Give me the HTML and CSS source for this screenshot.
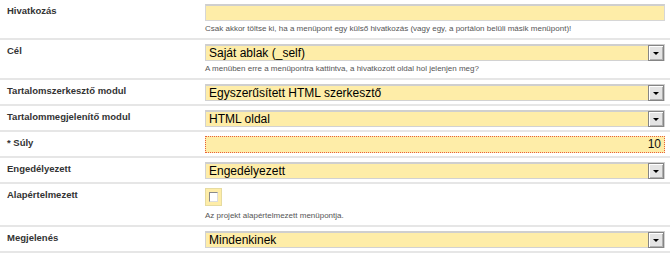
FILE: index.html
```html
<!DOCTYPE html>
<html lang="hu">
<head>
<meta charset="utf-8">
<link rel="stylesheet" href="styles.css">
</head>
<body>
<div class="form">
  <div class="row">
    <div class="label">Hivatkozás</div>
    <div class="field">
      <div class="input"></div>
      <div class="help">Csak akkor töltse ki, ha a menüpont egy külső hivatkozás (vagy egy, a portálon belüli másik menüpont)!</div>
    </div>
  </div>
  <div class="row">
    <div class="label">Cél</div>
    <div class="field">
      <div class="select"><span class="value">Saját ablak (_self)</span><span class="btn"><span class="tri"></span></span></div>
      <div class="help">A menüben erre a menüpontra kattintva, a hivatkozott oldal hol jelenjen meg?</div>
    </div>
  </div>
  <div class="row">
    <div class="label">Tartalomszerkesztő modul</div>
    <div class="field">
      <div class="select"><span class="value">Egyszerűsített HTML szerkesztő</span><span class="btn"><span class="tri"></span></span></div>
    </div>
  </div>
  <div class="row">
    <div class="label">Tartalommegjelenítő modul</div>
    <div class="field">
      <div class="select"><span class="value">HTML oldal</span><span class="btn"><span class="tri"></span></span></div>
    </div>
  </div>
  <div class="row">
    <div class="label">* Súly</div>
    <div class="field">
      <div class="input error">10</div>
    </div>
  </div>
  <div class="row">
    <div class="label">Engedélyezett</div>
    <div class="field">
      <div class="select"><span class="value">Engedélyezett</span><span class="btn"><span class="tri"></span></span></div>
    </div>
  </div>
  <div class="row">
    <div class="label">Alapértelmezett</div>
    <div class="field">
      <div class="check"><span class="box"></span></div>
      <div class="help help-check">Az projekt alapértelmezett menüpontja.</div>
    </div>
  </div>
  <div class="row">
    <div class="label">Megjelenés</div>
    <div class="field">
      <div class="select"><span class="value">Mindenkinek</span><span class="btn"><span class="tri"></span></span></div>
    </div>
  </div>
</div>
</body>
</html>
```
FILE: styles.css
```css
html, body {
  margin: 0;
  padding: 0;
  background: #ffffff;
}
body {
  font-family: "Liberation Sans", Arial, sans-serif;
  color: #333333;
}
.form {
  width: 670px;
}
.row {
  display: grid;
  grid-template-columns: 205px 460px;
  padding: 4px 0 3px 0;
  border-bottom: 2px solid #e6e6e6;
}
.label {
  padding-left: 7px;
  padding-top: 1px;
  font-size: 9.5px;
  font-weight: bold;
  color: #333333;
  line-height: 12px;
}
.field {
  display: flex;
  flex-direction: column;
}
.input {
  box-sizing: border-box;
  height: 17px;
  background: #feeda8;
  border: 1px solid #d6d6d6;
  border-top: 2px solid #cfcfcf;
  font-size: 12px;
  line-height: 14px;
  text-align: right;
  padding-right: 3px;
  color: #111111;
}
.input.error {
  border: 1px dotted #e8603c;
  line-height: 15px;
}
.select {
  box-sizing: border-box;
  height: 17px;
  background: #feeda8;
  border: 1px solid #d2d2d2;
  border-top: 2px solid #cfcfcf;
  display: flex;
  align-items: center;
  justify-content: space-between;
}
.value {
  padding-left: 3px;
  font-size: 12px;
  color: #000000;
  line-height: 14px;
}
.btn {
  box-sizing: border-box;
  width: 16px;
  height: 16px;
  margin-top: -1px;
  background: #e4e4e4;
  border: 1px solid #858585;
  box-shadow: inset 1px 1px 0 #ffffff, inset -1px -1px 0 #b0b0b0;
  display: flex;
  align-items: center;
  justify-content: center;
}
.tri {
  width: 0;
  height: 0;
  border-left: 3px solid transparent;
  border-right: 3px solid transparent;
  border-top: 3px solid #000000;
  margin-top: 1px;
}
.help {
  font-size: 8px;
  color: #555555;
  margin-top: 3px;
  margin-bottom: 1px;
  line-height: 10px;
}
.help-check {
  margin-top: 5px;
}
.check {
  box-sizing: border-box;
  width: 17px;
  height: 18px;
  background: #feeda8;
  padding: 3px;
  border: 1px solid #e6dba0;
}
.box {
  display: block;
  box-sizing: border-box;
  width: 100%;
  height: 100%;
  background: #ffffff;
  border: 1px solid #8a8a8a;
  border-right-color: #dcdcdc;
  border-bottom-color: #dcdcdc;
}
```
